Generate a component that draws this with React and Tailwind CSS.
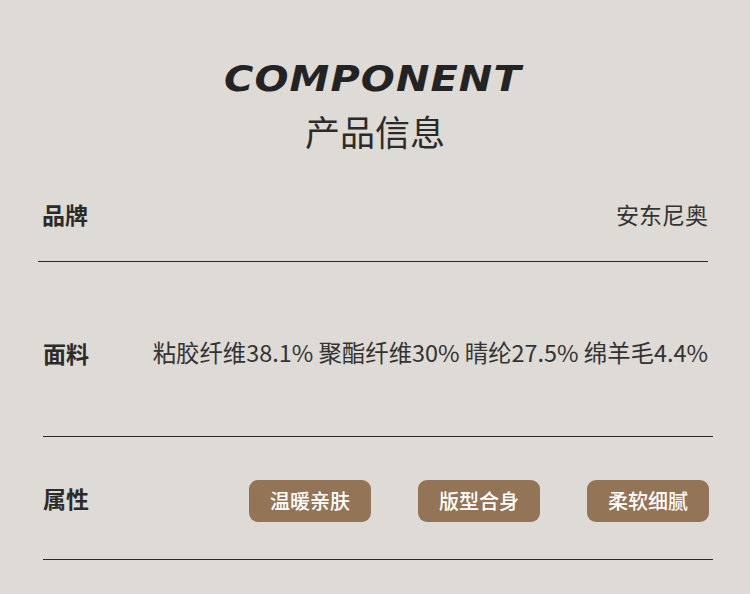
import React from 'react';

const cjk = { fontFamily: '"Noto Sans CJK SC", "Noto Sans", sans-serif' };

const tags = ['温暖亲肤', '版型合身', '柔软细腻'];

const App = () => {
    return (
        <div className="w-[750px] h-[594px] overflow-hidden bg-[#dedad5] text-[#2b2b2b]" style={cjk}>
            {/* Title */}
            <div className="pt-[61px] flex flex-col items-center">
                <h1
                    className="text-[36px] leading-none font-bold italic tracking-[1px] text-[#232323] scale-x-[1.11] pr-[4px]"
                    style={{ fontFamily: '"DejaVu Sans", sans-serif' }}
                >
                    COMPONENT
                </h1>
                <h2 className="mt-[16px] text-[35px] leading-none font-normal">产品信息</h2>
            </div>

            {/* Brand */}
            <div className="mt-[46px] pl-[38px] pr-[42px]">
                <div className="flex items-center justify-between h-[40px] pl-[4px]">
                    <span className="text-[23px] font-bold">品牌</span>
                    <span className="text-[23px] text-[#333]">安东尼奥</span>
                </div>
                <div className="mt-[27px] h-px bg-[#2b2b2b]" />
            </div>

            {/* Fabric */}
            <div className="pl-[43px] pr-[37px]">
                <div className="mt-[71px] flex items-center justify-between h-[40px]">
                    <span className="text-[23px] font-bold">面料</span>
                    <span className="text-[23.4px] text-[#333] pr-[5px]">粘胶纤维38.1% 聚酯纤维30% 晴纶27.5% 绵羊毛4.4%</span>
                </div>
                <div className="mt-[63px] h-px bg-[#2b2b2b]" />

                {/* Attributes */}
                <div className="mt-[42px] flex items-center justify-between h-[44px]">
                    <span className="text-[23px] font-bold mb-[6px]">属性</span>
                    <div className="flex items-center gap-[47px] pr-[4px]">
                        {tags.map((t) => (
                            <span
                                key={t}
                                className="w-[122px] h-[42px] rounded-[9px] bg-[#937456] text-white text-[20px] font-medium flex items-center justify-center"
                            >
                                {t}
                            </span>
                        ))}
                    </div>
                </div>
                <div className="mt-[36px] h-px bg-[#2b2b2b]" />
            </div>
        </div>
    );
};

export default App;
